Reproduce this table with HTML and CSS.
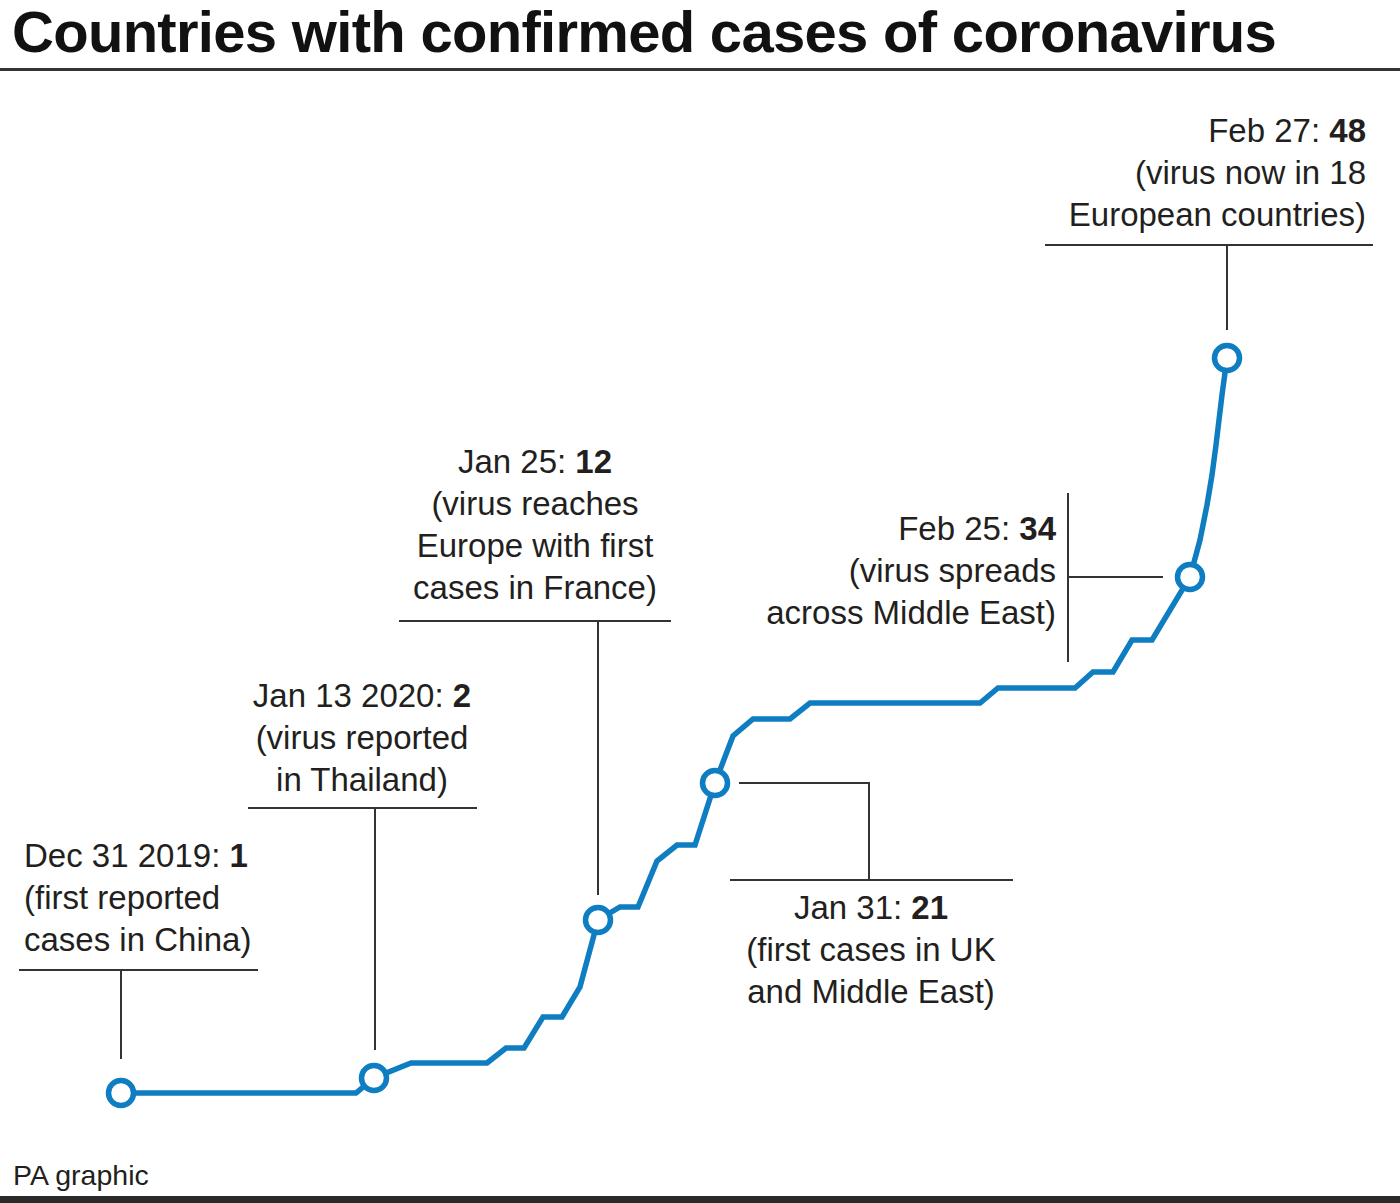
FILE: index.html
```html
<!DOCTYPE html>
<html lang="en">
<head>
<meta charset="utf-8">
<title>Countries with confirmed cases of coronavirus</title>
<link rel="stylesheet" href="styles.css">
</head>
<body>
<div class="graphic">
  <header class="head">
    <h1 class="title">Countries with confirmed cases of coronavirus</h1>
  </header>
  <div class="chart">
    <svg class="plot" width="1400" height="1079" viewBox="0 71 1400 1079" xmlns="http://www.w3.org/2000/svg">
      <g class="leaders">
        <path d="M19 970H258M121 970V1059"/>
        <path d="M248 808H477M375 808V1050"/>
        <path d="M399 621H671M598 621V895"/>
        <path d="M739 783H869V880M730 880H1013"/>
        <path d="M1068 493V662M1068 577H1163"/>
        <path d="M1045 245H1373M1227 245V330"/>
      </g>
      <polyline class="trend" points="121,1093 356,1093 374,1078 411,1063 487,1063 506,1048 524,1048 543,1017 562,1017 580,987 598,920 620,907 638,907 657,861 677,845 695,845 715,783 733,736 753,719 790,719 810,703 980,703 998,688 1075,688 1093,672 1113,672 1132,640 1152,640 1190,577 1200,540 1207,505 1212,475 1216,445 1222,395 1227,358"/>
      <g class="dots">
        <circle cx="121" cy="1093" r="12.5"/>
        <circle cx="374" cy="1078" r="12.5"/>
        <circle cx="598" cy="920" r="12.5"/>
        <circle cx="715" cy="783" r="12.5"/>
        <circle cx="1190" cy="577" r="12.5"/>
        <circle cx="1227" cy="358" r="12.5"/>
      </g>
    </svg>
    <div class="note n-dec">Dec 31 2019: <b>1</b><br>(first reported<br>cases in China)</div>
    <div class="note n-jan13">Jan 13 2020: <b>2</b><br>(virus reported<br>in Thailand)</div>
    <div class="note n-jan25">Jan 25: <b>12</b><br>(virus reaches<br>Europe with first<br>cases in France)</div>
    <div class="note n-jan31">Jan 31: <b>21</b><br>(first cases in UK<br>and Middle East)</div>
    <div class="note n-feb25">Feb 25: <b>34</b><br>(virus spreads<br>across Middle East)</div>
    <div class="note n-feb27">Feb 27: <b>48</b><br>(virus now in 18<br>European countries)</div>
  </div>
  <footer class="foot">
    <span class="credit">PA graphic</span>
  </footer>
</div>
</body>
</html>
```
FILE: styles.css
```css
html, body {
  margin: 0;
  padding: 0;
  background: #ffffff;
}

body {
  font-family: "Liberation Sans", Arial, sans-serif;
  color: #231f20;
  overflow: hidden;
}

.graphic {
  width: 1400px;
  height: 1203px;
  display: flex;
  flex-direction: column;
}

.head {
  padding: 2px 0 6px 12px;
  border-bottom: 3px solid #333333;
}

.title {
  margin: 0;
  font-size: 58px;
  line-height: 60px;
  font-weight: 700;
  letter-spacing: -0.7px;
  color: #111111;
}

.chart {
  position: relative;
  height: 1079px;
  flex: none;
}

.plot {
  display: block;
}

.leaders path {
  fill: none;
  stroke: #333333;
  stroke-width: 2;
}

.trend {
  fill: none;
  stroke: #0e7dc1;
  stroke-width: 5.5;
  stroke-linejoin: miter;
}

.dots circle {
  fill: #ffffff;
  stroke: #0e7dc1;
  stroke-width: 5.5;
}

.note {
  position: absolute;
  font-size: 33px;
  line-height: 42px;
  white-space: nowrap;
  color: #231f20;
}

.note b {
  font-weight: 700;
}

.n-dec {
  left: 24px;
  top: 764px;
}

.n-jan13 {
  left: 212px;
  width: 300px;
  top: 604px;
  text-align: center;
}

.n-jan25 {
  left: 385px;
  width: 300px;
  top: 370px;
  text-align: center;
}

.n-jan31 {
  left: 721px;
  width: 300px;
  top: 816px;
  text-align: center;
}

.n-feb25 {
  right: 344px;
  top: 437px;
  text-align: right;
}

.n-feb27 {
  right: 34px;
  top: 39px;
  text-align: right;
}

.foot {
  flex: 1;
  padding: 10px 0 0 13px;
  border-bottom: 7px solid #2a2a2a;
}

.credit {
  display: block;
  font-size: 28.5px;
  line-height: 31px;
  color: #231f20;
}
```
